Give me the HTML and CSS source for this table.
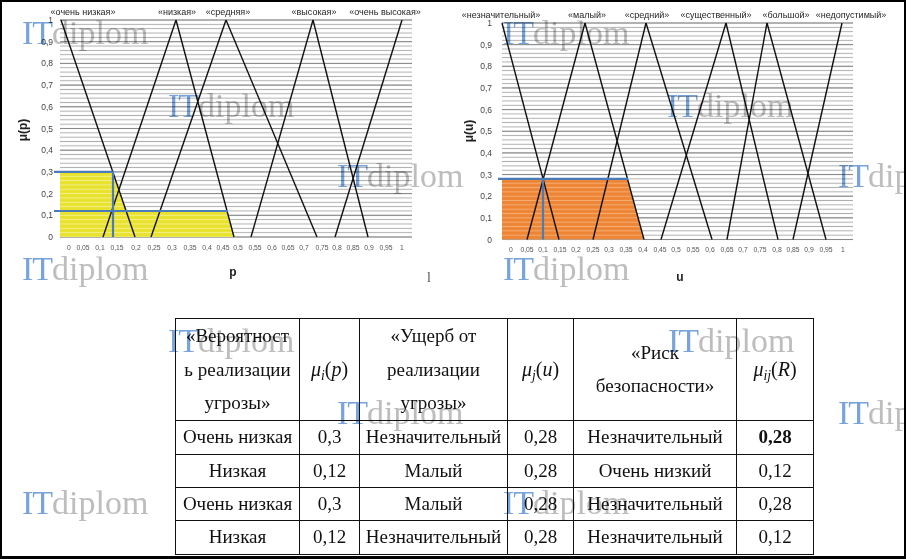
FILE: index.html
```
<!DOCTYPE html>
<html lang="ru">
<head>
<meta charset="utf-8">
<title>Нечеткие множества</title>
<link rel="stylesheet" href="styles.css">
</head>
<body>
<div class="frame">
  <div class="charts">
    <svg class="chart" width="448" height="298" viewBox="2 2 448 298" xmlns="http://www.w3.org/2000/svg">
      <defs>
        <pattern id="gridL" x="0" y="17.83" width="10" height="4.34" patternUnits="userSpaceOnUse">
          <rect x="0" y="1.67" width="10" height="1" fill="#adadad"/>
        </pattern>
        <pattern id="yelL" x="0" y="17.83" width="10" height="4.34" patternUnits="userSpaceOnUse">
          <rect x="0" y="0" width="10" height="4.34" fill="#e9e22c"/>
          <rect x="0" y="1.67" width="10" height="1" fill="#f3ee8e"/>
        </pattern>
      </defs>
      <rect x="60" y="18" width="352" height="221" fill="url(#gridL)"/>
      <g class="major">
        <line x1="60" x2="412" y1="20" y2="20"/>
        <line x1="60" x2="412" y1="41.7" y2="41.7"/>
        <line x1="60" x2="412" y1="63.4" y2="63.4"/>
        <line x1="60" x2="412" y1="85.1" y2="85.1"/>
        <line x1="60" x2="412" y1="106.8" y2="106.8"/>
        <line x1="60" x2="412" y1="128.5" y2="128.5"/>
        <line x1="60" x2="412" y1="150.2" y2="150.2"/>
        <line x1="60" x2="412" y1="171.9" y2="171.9"/>
        <line x1="60" x2="412" y1="193.6" y2="193.6"/>
        <line x1="60" x2="412" y1="215.3" y2="215.3"/>
        <line x1="60" x2="412" y1="237" y2="237"/>
      </g>
      <polygon points="60,171.9 113,171.9 126.1,211 227,211 234,237 60,237" fill="url(#yelL)"/>
      <g class="mf">
        <line x1="61" y1="20" x2="135" y2="237"/>
        <line x1="103" y1="237" x2="176" y2="20"/>
        <line x1="176" y1="20" x2="234" y2="237"/>
        <line x1="151" y1="237" x2="226" y2="20"/>
        <line x1="226" y1="20" x2="317" y2="237"/>
        <line x1="251" y1="237" x2="313" y2="20"/>
        <line x1="313" y1="20" x2="368" y2="237"/>
        <line x1="335" y1="237" x2="402" y2="20"/>
      </g>
      <g class="cut">
        <polyline points="54,171.9 113,171.9 113,237"/>
        <line x1="54" y1="211" x2="228" y2="211"/>
      </g>
      <g class="ylab">
        <text x="53" y="23">1</text>
        <text x="53" y="44.7">0,9</text>
        <text x="53" y="66.4">0,8</text>
        <text x="53" y="88.1">0,7</text>
        <text x="53" y="109.8">0,6</text>
        <text x="53" y="131.5">0,5</text>
        <text x="53" y="153.2">0,4</text>
        <text x="53" y="174.9">0,3</text>
        <text x="53" y="196.6">0,2</text>
        <text x="53" y="218.3">0,1</text>
        <text x="53" y="240">0</text>
      </g>
      <g class="xlab">
        <text x="69" y="249.5">0</text>
        <text x="83" y="249.5">0,05</text>
        <text x="100" y="249.5">0,1</text>
        <text x="117" y="249.5">0,15</text>
        <text x="136" y="249.5">0,2</text>
        <text x="154" y="249.5">0,25</text>
        <text x="172" y="249.5">0,3</text>
        <text x="190" y="249.5">0,35</text>
        <text x="207" y="249.5">0,4</text>
        <text x="223" y="249.5">0,45</text>
        <text x="238" y="249.5">0,5</text>
        <text x="255" y="249.5">0,55</text>
        <text x="272" y="249.5">0,6</text>
        <text x="288" y="249.5">0,65</text>
        <text x="304" y="249.5">0,7</text>
        <text x="322" y="249.5">0,75</text>
        <text x="337" y="249.5">0,8</text>
        <text x="353" y="249.5">0,85</text>
        <text x="369" y="249.5">0,9</text>
        <text x="386" y="249.5">0,95</text>
        <text x="402" y="249.5">1</text>
      </g>
      <g class="toplab">
        <text x="83" y="15">«очень низкая»</text>
        <text x="177" y="15">«низкая»</text>
        <text x="228" y="15">«средняя»</text>
        <text x="314" y="15">«высокая»</text>
        <text x="385" y="15">«очень высокая»</text>
      </g>
      <text class="atitle" transform="translate(27 130) rotate(-90)">μ(p)</text>
      <text class="atitle" x="233" y="276">p</text>
      <text class="mark" x="427" y="282">l</text>
    </svg>

    <svg class="chart" width="454" height="298" viewBox="450 2 454 298" xmlns="http://www.w3.org/2000/svg">
      <defs>
        <pattern id="gridR" x="0" y="20.835" width="10" height="4.33" patternUnits="userSpaceOnUse">
          <rect x="0" y="1.665" width="10" height="1" fill="#adadad"/>
        </pattern>
        <pattern id="orR" x="0" y="20.835" width="10" height="4.33" patternUnits="userSpaceOnUse">
          <rect x="0" y="0" width="10" height="4.33" fill="#ee8535"/>
          <rect x="0" y="1.665" width="10" height="1" fill="#f5ad74"/>
        </pattern>
      </defs>
      <rect x="502" y="21" width="351" height="220.6" fill="url(#gridR)"/>
      <g class="major">
        <line x1="502" x2="853" y1="23" y2="23"/>
        <line x1="502" x2="853" y1="44.65" y2="44.65"/>
        <line x1="502" x2="853" y1="66.3" y2="66.3"/>
        <line x1="502" x2="853" y1="87.95" y2="87.95"/>
        <line x1="502" x2="853" y1="109.6" y2="109.6"/>
        <line x1="502" x2="853" y1="131.25" y2="131.25"/>
        <line x1="502" x2="853" y1="152.9" y2="152.9"/>
        <line x1="502" x2="853" y1="174.55" y2="174.55"/>
        <line x1="502" x2="853" y1="196.2" y2="196.2"/>
        <line x1="502" x2="853" y1="217.85" y2="217.85"/>
        <line x1="502" x2="853" y1="239.5" y2="239.5"/>
      </g>
      <polygon points="502,178.9 627.5,178.9 644,239.5 502,239.5" fill="url(#orR)"/>
      <g class="mf">
        <line x1="502" y1="23" x2="559" y2="239.5"/>
        <line x1="527" y1="239.5" x2="585" y2="23"/>
        <line x1="585" y1="23" x2="644" y2="239.5"/>
        <line x1="593" y1="239.5" x2="646" y2="23"/>
        <line x1="646" y1="23" x2="712" y2="239.5"/>
        <line x1="661" y1="239.5" x2="726" y2="23"/>
        <line x1="726" y1="23" x2="778" y2="239.5"/>
        <line x1="727" y1="239.5" x2="767" y2="23"/>
        <line x1="767" y1="23" x2="826" y2="239.5"/>
        <line x1="793" y1="239.5" x2="842" y2="23"/>
      </g>
      <g class="cut">
        <line x1="498" y1="178.9" x2="628" y2="178.9"/>
        <line x1="543" y1="178.9" x2="543" y2="239.5"/>
      </g>
      <g class="ylab">
        <text x="492" y="26">1</text>
        <text x="492" y="47.65">0,9</text>
        <text x="492" y="69.3">0,8</text>
        <text x="492" y="90.95">0,7</text>
        <text x="492" y="112.6">0,6</text>
        <text x="492" y="134.25">0,5</text>
        <text x="492" y="155.9">0,4</text>
        <text x="492" y="177.55">0,3</text>
        <text x="492" y="199.2">0,2</text>
        <text x="492" y="220.85">0,1</text>
        <text x="492" y="242.5">0</text>
      </g>
      <g class="xlab">
        <text x="511" y="251.5">0</text>
        <text x="527" y="251.5">0,05</text>
        <text x="543" y="251.5">0,1</text>
        <text x="560" y="251.5">0,15</text>
        <text x="576" y="251.5">0,2</text>
        <text x="593" y="251.5">0,25</text>
        <text x="609" y="251.5">0,3</text>
        <text x="626" y="251.5">0,35</text>
        <text x="643" y="251.5">0,4</text>
        <text x="660" y="251.5">0,45</text>
        <text x="676" y="251.5">0,5</text>
        <text x="693" y="251.5">0,55</text>
        <text x="710" y="251.5">0,6</text>
        <text x="727" y="251.5">0,65</text>
        <text x="743" y="251.5">0,7</text>
        <text x="760" y="251.5">0,75</text>
        <text x="777" y="251.5">0,8</text>
        <text x="793" y="251.5">0,85</text>
        <text x="809" y="251.5">0,9</text>
        <text x="826" y="251.5">0,95</text>
        <text x="843" y="251.5">1</text>
      </g>
      <g class="toplab">
        <text x="501" y="18">«незначительный»</text>
        <text x="587" y="18">«малый»</text>
        <text x="647" y="18">«средний»</text>
        <text x="716" y="18">«существенный»</text>
        <text x="786" y="18">«большой»</text>
        <text x="851" y="18">«недопустимый»</text>
      </g>
      <text class="atitle" transform="translate(473 131) rotate(-90)">μ(u)</text>
      <text class="atitle" x="680" y="281">u</text>
    </svg>
  </div>

  <div class="table-wrap">
    <table class="risk">
      <colgroup>
        <col class="c1"><col class="c2"><col class="c3"><col class="c4"><col class="c5"><col class="c6">
      </colgroup>
      <thead>
        <tr>
          <th>«Вероятност<br>ь реализации<br>угрозы»</th>
          <th><span class="m"><i>μ</i><sub>i</sub>(<i>p</i>)</span></th>
          <th>«Ущерб от<br>реализации<br>угрозы»</th>
          <th><span class="m"><i>μ</i><sub>j</sub>(<i>u</i>)</span></th>
          <th>«Риск<br>безопасности»</th>
          <th><span class="m"><i>μ</i><sub>ij</sub>(<i>R</i>)</span></th>
        </tr>
      </thead>
      <tbody>
        <tr class="r1">
          <td>Очень низкая</td><td>0,3</td><td>Незначительный</td><td>0,28</td><td>Незначительный</td><td><b>0,28</b></td>
        </tr>
        <tr class="r2">
          <td>Низкая</td><td>0,12</td><td>Малый</td><td>0,28</td><td>Очень низкий</td><td>0,12</td>
        </tr>
        <tr class="r2">
          <td>Очень низкая</td><td>0,3</td><td>Малый</td><td>0,28</td><td>Незначительный</td><td>0,28</td>
        </tr>
        <tr class="r1">
          <td>Низкая</td><td>0,12</td><td>Незначительный</td><td>0,28</td><td>Незначительный</td><td>0,12</td>
        </tr>
      </tbody>
    </table>
  </div>

  <div class="wm w1"><span class="it">IT</span><span class="dp">diplom</span></div>
  <div class="wm w2"><span class="it">IT</span><span class="dp">diplom</span></div>
  <div class="wm w3"><span class="it">IT</span><span class="dp">diplom</span></div>
  <div class="wm w4"><span class="it">IT</span><span class="dp">diplom</span></div>
  <div class="wm w5"><span class="it">IT</span><span class="dp">diplom</span></div>
  <div class="wm w6"><span class="it">IT</span><span class="dp">diplom</span></div>
  <div class="wm w7"><span class="it">IT</span><span class="dp">diplom</span></div>
  <div class="wm w8"><span class="it">IT</span><span class="dp">diplom</span></div>
  <div class="wm w9"><span class="it">IT</span><span class="dp">diplom</span></div>
  <div class="wm w10"><span class="it">IT</span><span class="dp">diplom</span></div>
  <div class="wm w11"><span class="it">IT</span><span class="dp">diplom</span></div>
  <div class="wm w12"><span class="it">IT</span><span class="dp">diplom</span></div>
  <div class="wm w13"><span class="it">IT</span><span class="dp">diplom</span></div>
  <div class="wm w14"><span class="it">IT</span><span class="dp">diplom</span></div>
</div>
</body>
</html>
```

FILE: styles.css
```
* { box-sizing: border-box; }

html, body {
  margin: 0;
  padding: 0;
  background: #fff;
}

.frame {
  position: relative;
  width: 906px;
  height: 559px;
  border: 2px solid #000;
  border-bottom-width: 3px;
  overflow: hidden;
  background: #fff;
  font-family: "Liberation Serif", "Times New Roman", serif;
}

.charts {
  display: flex;
  height: 298px;
}

.chart {
  display: block;
  flex: none;
}

.chart .major line {
  stroke: #8a8a8a;
  stroke-width: 1;
}

.chart .mf line {
  stroke: #111;
  stroke-width: 1.4;
}

.chart .cut line,
.chart .cut polyline {
  stroke: #4a7cb9;
  stroke-width: 2.2;
  fill: none;
}

.chart text {
  font-family: "Liberation Sans", Arial, sans-serif;
}

.chart .ylab text {
  font-size: 8.5px;
  fill: #444;
  text-anchor: end;
}

.chart .xlab text {
  font-size: 6.8px;
  fill: #555;
  text-anchor: middle;
}

.chart .toplab text {
  font-size: 9px;
  fill: #1e1e1e;
  text-anchor: middle;
}

.chart .atitle {
  font-size: 12px;
  font-weight: bold;
  fill: #222;
  text-anchor: middle;
}

.chart .mark {
  font-family: "Liberation Serif", serif;
  font-size: 14px;
  fill: #555;
}

.table-wrap {
  margin-top: 18px;
  padding-left: 173px;
}

.risk {
  border-collapse: collapse;
  table-layout: fixed;
  width: 638px;
  font-family: "Liberation Serif", "Times New Roman", serif;
  font-size: 19px;
  color: #111;
}

.risk .c1 { width: 124px; }
.risk .c2 { width: 60px; }
.risk .c3 { width: 148px; }
.risk .c4 { width: 66px; }
.risk .c5 { width: 163px; }
.risk .c6 { width: 77px; }

.risk th,
.risk td {
  border: 1.5px solid #111;
  padding: 0;
  text-align: center;
  vertical-align: middle;
  white-space: nowrap;
}

.risk th {
  font-weight: normal;
  height: 101px;
  line-height: 33.5px;
}

.risk td {
  line-height: 30px;
}

.risk .r1 td { height: 34px; }
.risk .r2 td { height: 33px; }

.risk b { font-weight: bold; }

.m {
  font-size: 20px;
  white-space: nowrap;
}

.m i {
  font-style: italic;
}

.m sub {
  font-style: italic;
  font-size: 0.68em;
  vertical-align: -0.3em;
  line-height: 0;
}

.wm {
  position: absolute;
  font-family: "Liberation Serif", "Times New Roman", serif;
  font-size: 34px;
  line-height: 34px;
  white-space: nowrap;
  mix-blend-mode: multiply;
  pointer-events: none;
}

.wm .it {
  color: #78a4db;
  letter-spacing: -1px;
}

.wm .dp {
  color: #bdbdbd;
}

.w1  { left: 20px;  top: 14px; }
.w2  { left: 501px; top: 14px; }
.w3  { left: 166px; top: 87px; }
.w4  { left: 665px; top: 87px; }
.w5  { left: 335px; top: 157px; }
.w6  { left: 836px; top: 157px; }
.w7  { left: 20px;  top: 250px; }
.w8  { left: 501px; top: 250px; }
.w9  { left: 166px; top: 322px; }
.w10 { left: 666px; top: 322px; }
.w11 { left: 335px; top: 394px; }
.w12 { left: 836px; top: 394px; }
.w13 { left: 20px;  top: 484px; }
.w14 { left: 501px; top: 484px; }
```
